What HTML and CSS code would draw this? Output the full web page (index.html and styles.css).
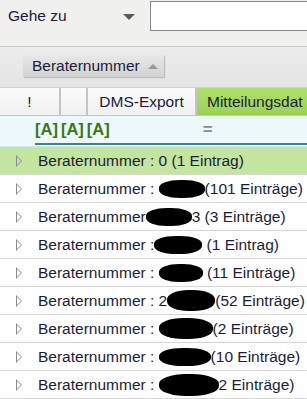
FILE: index.html
```html
<!DOCTYPE html>
<html lang="de">
<head>
    <meta charset="UTF-8">
    <title>Gehe zu</title>
    <link rel="stylesheet" href="styles.css">
</head>
<body>
    <div class="toolbar">
        <span class="goto-label">Gehe zu</span>
        <span class="goto-arrow"></span>
        <div class="goto-input"></div>
    </div>
    <div class="group-panel">
        <div class="group-chip">Beraternummer <span class="sort-up"></span></div>
    </div>
    <div class="col-header">
        <div class="col col-flag">!</div>
        <div class="col col-blank"></div>
        <div class="col col-dms">DMS-Export</div>
        <div class="col col-date">Mitteilungsdat</div>
    </div>
    <div class="filter-row">
        <div class="filter-line">
            <span class="filter-a">[A]</span><span class="filter-a">[A]</span><span class="filter-a">[A]</span>
            <span class="filter-eq">=</span>
        </div>
    </div>
    <div class="rows">
        <div class="group-row active"><span class="expander"></span>Beraternummer : 0 (1 Eintrag)</div>
        <div class="group-row"><span class="expander"></span>Beraternummer :&nbsp;<span class="blob b1"></span>(101 Einträge)</div>
        <div class="group-row"><span class="expander"></span>Beraternummer <span class="blob b2"></span>3 (3 Einträge)</div>
        <div class="group-row"><span class="expander"></span>Beraternummer :<span class="blob b3"></span>&nbsp;(1 Eintrag)</div>
        <div class="group-row"><span class="expander"></span>Beraternummer :&nbsp;<span class="blob b4"></span>&nbsp;(11 Einträge)</div>
        <div class="group-row"><span class="expander"></span>Beraternummer : 2<span class="blob b5"></span>(52 Einträge)</div>
        <div class="group-row"><span class="expander"></span>Beraternummer :&nbsp;<span class="blob b6"></span>(2 Einträge)</div>
        <div class="group-row"><span class="expander"></span>Beraternummer :&nbsp;<span class="blob b7"></span>(10 Einträge)</div>
        <div class="group-row"><span class="expander"></span>Beraternummer :&nbsp;<span class="blob b8"></span>2 Einträge)</div>
    </div>
</body>
</html>
```

FILE: styles.css
```css
body {
    margin: 0;
    width: 307px;
    height: 399px;
    overflow: hidden;
    font-family: "Liberation Sans", Arial, sans-serif;
    font-size: 15.5px;
    color: #1c1c38;
    background-color: #ffffff;
}
.toolbar {
    display: flex;
    align-items: flex-start;
    height: 45px;
    padding-top: 1px;
    background-color: #f0f0ee;
    border-bottom: 1px solid #c9c9c9;
}
.goto-label {
    margin-left: 8px;
    width: 115px;
    line-height: 30px;
}
.goto-arrow {
    margin-top: 13px;
    width: 0;
    height: 0;
    border-left: 6px solid transparent;
    border-right: 6px solid transparent;
    border-top: 6px solid #5a5a5a;
}
.goto-input {
    margin-left: 15px;
    flex: 1;
    height: 28px;
    background-color: #ffffff;
    border: 1px solid #8a8a8a;
    border-right: none;
}
.group-panel {
    height: 32px;
    padding: 8px 0 0 23px;
    background: linear-gradient(#ececec, #e4e4e4);
    border-bottom: 1px solid #d0d0d0;
}
.group-chip {
    display: flex;
    align-items: center;
    width: 132px;
    height: 22px;
    padding-left: 9px;
    background: linear-gradient(#e8e8e8, #d2d2d2);
    box-shadow: 1px 1px 1px #bdbdbd;
}
.sort-up {
    margin-left: 8px;
    width: 0;
    height: 0;
    border-left: 5px solid transparent;
    border-right: 5px solid transparent;
    border-bottom: 5px solid #9a9a9a;
}
.col-header {
    display: flex;
    height: 27px;
    border-bottom: 1px solid #c6c6c6;
    background: linear-gradient(#fbfbfb, #f0f0f0);
}
.col {
    display: flex;
    align-items: center;
    justify-content: center;
    border-right: 2px solid #c4c4c4;
    white-space: nowrap;
    overflow: hidden;
}
.col-flag {
    width: 59px;
}
.col-blank {
    width: 25px;
}
.col-dms {
    width: 107px;
}
.col-date {
    flex: 1;
    justify-content: flex-start;
    padding-left: 10px;
    border-right: none;
    background: linear-gradient(#b0e06c, #9bd252);
}
.filter-row {
    height: 30px;
    background-color: #edf8fb;
    border-bottom: 1px solid #cfe9ee;
}
.filter-line {
    display: flex;
    align-items: center;
    height: 27px;
    margin-left: 35px;
    border-bottom: 2px solid #3f8680;
}
.filter-a {
    color: #3d7420;
    font-weight: bold;
    font-size: 16.5px;
    margin-right: 3px;
}
.filter-eq {
    margin-left: 90px;
    color: #8c8c8c;
    font-weight: bold;
    font-size: 17px;
}
.group-row {
    display: flex;
    align-items: center;
    height: 27px;
    border-bottom: 1px solid #d6d6d6;
    white-space: nowrap;
}
.group-row.active {
    background-color: #c4e5a0;
}
.expander {
    margin-left: 16px;
    margin-right: 16px;
    width: 0;
    height: 0;
    border-top: 6px solid transparent;
    border-bottom: 6px solid transparent;
    border-left: 6px solid #8c8c8c;
    position: relative;
}
.expander::after {
    content: "";
    position: absolute;
    left: -5px;
    top: -4px;
    border-top: 4px solid transparent;
    border-bottom: 4px solid transparent;
    border-left: 4px solid #ffffff;
}
.active .expander::after {
    border-left-color: #c4e5a0;
}
.blob {
    display: inline-block;
    height: 18px;
    background-color: #000000;
    border-radius: 45%;
}
.b1 { width: 46px; }
.b2 { width: 46px; }
.b3 { width: 48px; }
.b4 { width: 44px; }
.b5 { width: 48px; height: 21px; }
.b6 { width: 54px; height: 21px; }
.b7 { width: 52px; }
.b8 { width: 60px; height: 22px; }
```
